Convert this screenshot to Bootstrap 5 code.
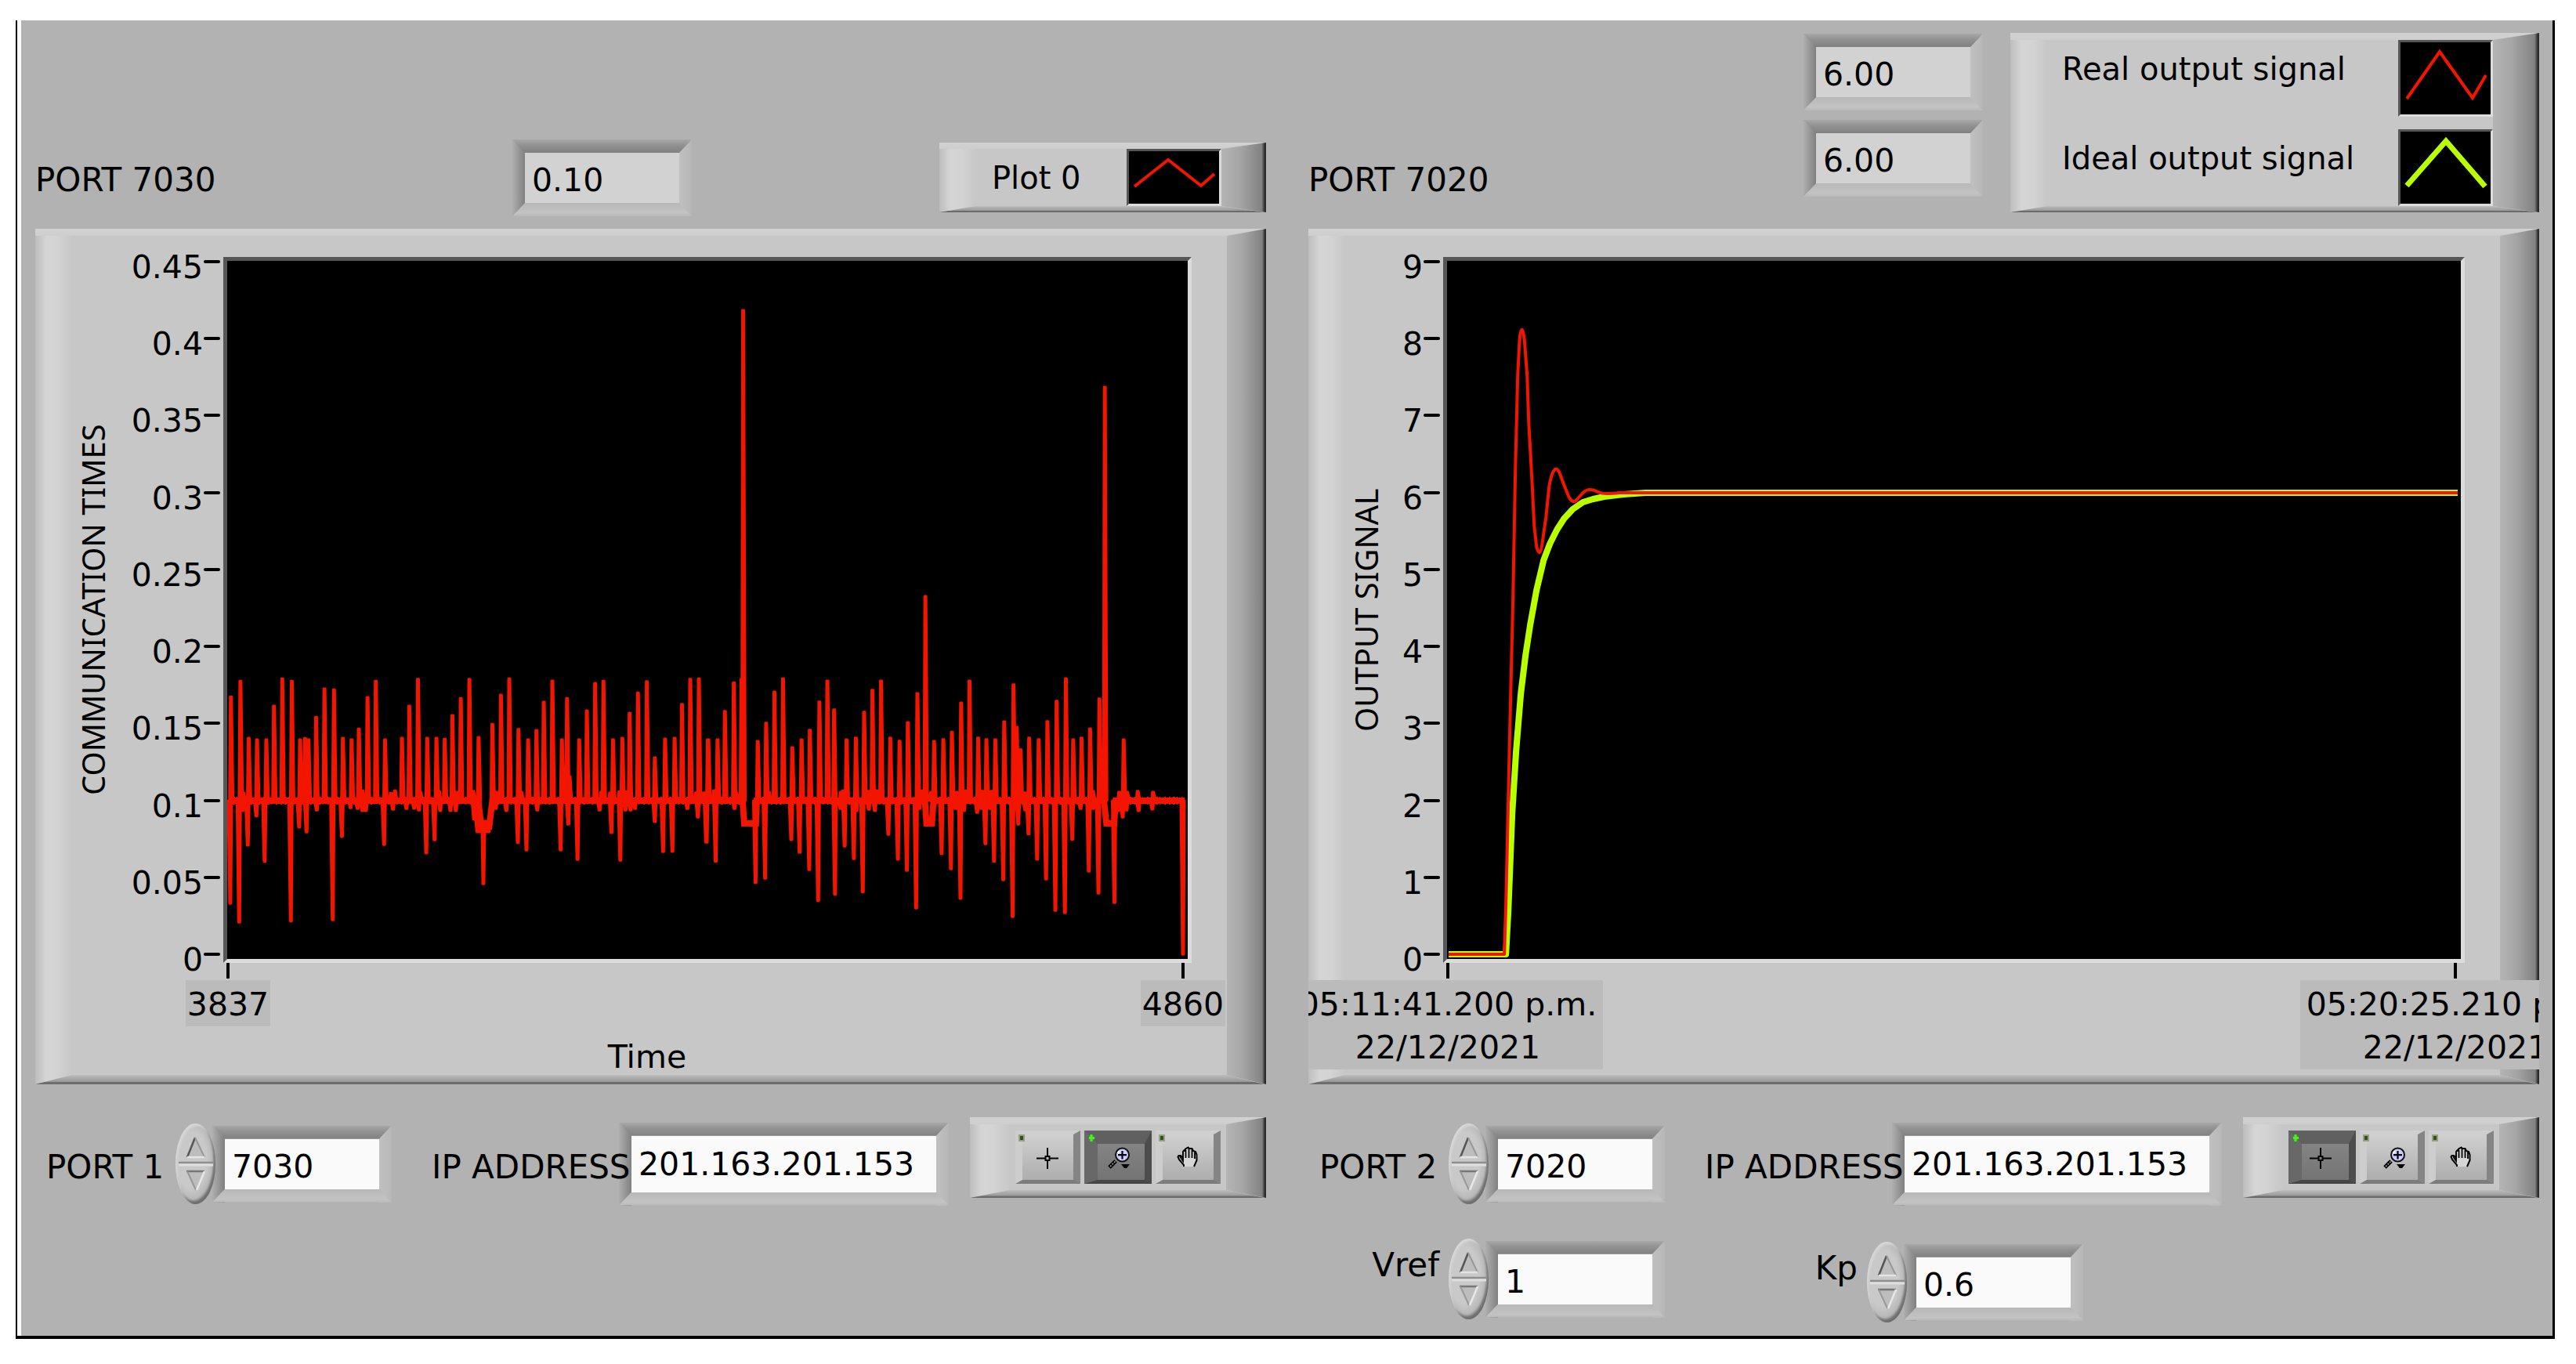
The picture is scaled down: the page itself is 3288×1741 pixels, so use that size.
<!DOCTYPE html>
<html lang="en">
<head>
<meta charset="utf-8">
<meta name="viewport" content="width=device-width, initial-scale=1">
<title>Remote control panel</title>
<link href="https://cdn.jsdelivr.net/npm/bootstrap@5.3.0/dist/css/bootstrap.min.css" rel="stylesheet">
<script src="https://cdn.jsdelivr.net/npm/bootstrap@5.3.0/dist/js/bootstrap.bundle.min.js"></script>
<style>
body { background: #fff; color: #000; font: 41px/50px "DejaVu Sans", Verdana, sans-serif; }
.window { margin: 26px 27px 0 20px; border: solid #000; border-width: 0 3px 4px 2px; padding-left: 5px; }
.front { background: #b2b2b2; padding: 0 17px 17px 18px; gap: 54px; }
.side { flex: 1 1 0; min-width: 0; }
.caption { padding-top: 8px; font-size: 42px; line-height: 42px; white-space: nowrap; }

/* raised metal plate */
.plate { position: relative; --l: 47px; --r: 50px; --t: 9px; --b: 12px;
  padding: var(--t) var(--r) var(--b) var(--l);
  background: linear-gradient(#d2d2d2, #cecece) top/100% var(--t) no-repeat,
    linear-gradient(90deg, #bdbdbd, #d5d5d5 30%, #d3d3d3 60%, #c7c7c7) left/var(--l) 100% no-repeat, #c7c7c7; }
.plate::before, .plate::after { content: ""; position: absolute; pointer-events: none; }
.plate::before { right: 0; top: 0; bottom: 0; width: var(--r);
  background: linear-gradient(90deg, #b4b4b4, #a6a6a6 40%, #828282 90%, #2c2c2c 97%);
  clip-path: polygon(100% 0, 100% 100%, 0 calc(100% - var(--b)), 0 var(--t)); }
.plate::after { left: 0; right: 0; bottom: 0; height: var(--b);
  background: linear-gradient(#bdbdbd, #9a9a9a 70%, #6c6c6c 80%);
  clip-path: polygon(0 100%, var(--l) 0, calc(100% - var(--r)) 0, calc(100% - 2px) 100%); }

/* sunken frame round a value */
.well { position: relative; padding: 17px 16px; width: 229px;
  background: linear-gradient(90deg, #aeaeae, #9c9c9c 40%, #808080) left/16px 100% no-repeat,
    linear-gradient(90deg, #c0c0c0, #bababa 70%, #b6b6b6) right/16px 100% no-repeat; }
.well::before, .well::after { content: ""; position: absolute; left: 0; right: 0; height: 17px; }
.well::before { top: 0; background: linear-gradient(#a8a8a8, #939393 40%, #808080);
  clip-path: polygon(0 0, 100% 0, calc(100% - 16px) 100%, 16px 100%); }
.well::after { bottom: 0; background: linear-gradient(#b8b8b8, #c3c3c3 75%, #b8b8b8);
  clip-path: polygon(0 100%, 16px 0, calc(100% - 16px) 0, 100% 100%); }
.field { display: block; width: 100%; height: 64px; border: 0; border-radius: 0; outline: 0; padding: 6px 0 0 9px;
  background: #fafafa; color: #000; line-height: 50px; }
.field[readonly] { background: #d2d2d2; }
.well-ip { width: 421px; }
.well-ip .field { height: 72px; padding-top: 0; }

.head { height: 266px; padding-bottom: 16px; }
.head-label { font-size: 42px; line-height: 92px; flex: 0 0 609px; }
.legend { --l: 47px; --r: 57px; --t: 8px; --b: 8px; font-size: 40px; margin-bottom: 5px; }
.legend-one { width: 417px; padding-left: 67px; }
.legend-two { width: 675px; padding-left: 66px; --r: 59px; --t: 9px; gap: 16px; }
.swatch, .plot { border: 5px solid; border-color: #565656 #dcdcdc #dcdcdc #565656; background: #000; }
.swatch { width: 121px; height: 98px; border-width: 3px; }
.legend-one .swatch { height: 73px; }
.legend-two .entry { height: 98px; }
.legend-two .entry-name { padding-bottom: 24px; }
.readouts { gap: 12px; margin: 0 35px 25px auto; }

.chart { overflow: hidden; padding: 36px 0 0; }
.plot-row { padding-right: 95px; }
.axis-title { width: 40px; margin-left: 54px; writing-mode: vertical-rl; transform: rotate(180deg);
  font: 40px/40px "Noto Sans", sans-serif; text-align: center; }
.scale { margin: -19px 4px -14px 0; }
.scale-mark::after { content: ""; width: 21px; height: 4px; border-radius: 2px; background: #000; margin-left: 1px; }
.scale-num { line-height: 36px; padding-top: 14px; }
.scale-left { width: 142px; }
.scale-right { width: 74px; }
.plot { flex: 1 1 0; min-width: 0; }
.plot svg { display: block; width: 100%; height: 891px; }
.foot { margin: 0 106px 0 246px; position: relative; z-index: 1; }
.foot-right { margin-left: 178px; margin-right: 107px; }
.foot-mark { width: 0; white-space: nowrap; text-align: center; line-height: 55px; }
.foot-mark::before { content: ""; flex: 0 0 20px; width: 4px; background: #000; margin-bottom: 2px; }
.foot-text { background: #bbb; padding: 4px 2px 0; }
.chart-right { padding-bottom: 19px; }
.time-title { line-height: 55px; padding: 12px 9px 7px 0; }

.controls { padding: 42px 0 0 14px; }
.name { width: 165px; }
.name-ip { width: 239px; margin-left: 51px; position: relative; z-index: 1; }
.controls-two { padding-top: 36px; }
.name-high { margin-bottom: 44px; text-align: right; padding-right: 12px; width: 179px; }
.name-kp { width: 258px; }
.spin { width: 51px; height: 103px; margin-right: -4px; border-radius: 50%; overflow: hidden; position: relative; z-index: 1;
  background: radial-gradient(ellipse at 40% 45%, #c9c9c9 45%, #b9b9b9 62%, #7a7a7a 76%);
  box-shadow: inset 2px 3px 3px #d8d8d8, inset -2px -4px 3px #6f6f6f; }
.spin button, .tool { border: 0; padding: 0; background: none; display: block; }
.spin svg, .tool svg, .swatch svg { display: block; }
.tools { --t: 9px; --b: 10px; --l: 51px; --r: 51px; width: 378px; height: 103px; padding: 17px 58px; gap: 5px; }
.tool { flex: 1 1 0; height: 68px; background: linear-gradient(#d0d0d0, #c2c2c2 40%, #adadad);
  border: solid; border-width: 5px 9px 5px 9px; border-color: #cfcfcf #858585 #7c7c7c #cdcdcd; }
.tool svg { margin: -5px -9px; }
.tool.active { background: linear-gradient(#848484, #747474); border-color: #606060 #4c4c4c #464646 #686868; border-top-width: 17px; border-left-width: 17px; }
.tool.active svg { margin: -17px -9px -5px -17px; }
</style>
</head>
<body>
<svg width="0" height="0" class="position-absolute" aria-hidden="true">
  <defs>
    <g id="up"><path d="M25 18 15 43H37Z" fill="#bdbdbd"/><path d="M25 18 15 43" stroke="#555" stroke-width="2.5"/><path d="M25 18 37 43" stroke="#989898" stroke-width="2"/><path d="M15 43H37" stroke="#e4e4e4" stroke-width="2.5"/><path d="M4 50H48" stroke="#8d8d8d" stroke-width="2.5"/></g>
    <g id="down"><path d="M4 2H48" stroke="#dedede" stroke-width="3"/><path d="M15 10H37L26 34Z" fill="#bdbdbd"/><path d="M14 10H37" stroke="#777" stroke-width="2.5"/><path d="M15 10 26 34" stroke="#999" stroke-width="2"/><path d="M37 10 27 34" stroke="#e8e8e8" stroke-width="2.5"/></g>
    <g id="cross" fill="none" stroke="#000" stroke-width="2"><path d="M41 22V33M41 38V49M27 35.500H38M44 35.500H55"/><rect x="38.500" y="33" width="5" height="5"/></g>
    <g id="lens"><path d="M40 39 32 47" stroke="#000" stroke-width="5"/><path d="M39.500 39.500 33 46" stroke="#aaa" stroke-width="1.500" stroke-dasharray="2 1.500"/><circle cx="48.500" cy="31" r="8.500" fill="#ccf" stroke="#111" stroke-width="2"/><path d="M45 26.500 42.500 29" stroke="#fff" stroke-width="2"/><path d="M48.500 26V36.500M43 31.200H54" stroke="#000" stroke-width="2.200"/><path d="M47 43H58L54 48H51Z"/></g>
    <g id="hand"><path d="M36 46V44L30 37 28.500 33.500 29.500 32H32L35 35V27L36.500 25 38 26V23.500L40 22.500 41.500 21.500 43 23 46.500 23 48 26 51 27 52.500 31V38L49 46" fill="#d6d6d6" stroke="#000" stroke-width="2"/><path d="M38.500 25V35M42.500 22.500V35M46.500 24V35M50 27V36M35 33V39L31 33" fill="none" stroke="#000" stroke-width="1.800"/></g>
    <g id="led-off"><rect x="4" y="5" width="8" height="9" fill="#93a084"/><rect x="6" y="7" width="4" height="5" fill="#2f5020"/></g>
    <g id="led-on"><rect x="5" y="6" width="8" height="7" rx="2" fill="#4a8a35"/><path d="M9 5V14M6 9.500H13" stroke="#49f021" stroke-width="3"/></g>
  </defs>
</svg>

<main class="window">
  <div class="front d-flex">
    <section class="side">
      <header class="head d-flex align-items-end">
        <label class="head-label" for="delay">PORT 7030</label>
        <div class="well"><input class="field" id="delay" value="0.10" readonly></div>
        <div class="plate legend legend-one d-flex align-items-center justify-content-between ms-auto">
          <span>Plot 0</span>
          <span class="swatch"><svg width="115" height="67" viewBox="0 0 115 67"><path d="M7 45 50 11 92 44 109 29" fill="none" stroke="#f21500" stroke-width="4"/></svg></span>
        </div>
      </header>

      <div class="plate chart">
        <div class="plot-row d-flex">
          <div class="axis-title">COMMUNICATION TIMES</div>
          <div class="scale scale-left d-flex flex-column justify-content-between" data-marks="0.45 0.4 0.35 0.3 0.25 0.2 0.15 0.1 0.05 0"></div>
          <div class="plot"><svg viewBox="0 0 1228 891" preserveAspectRatio="none" role="img" aria-label="Communication times"><path id="times" fill="#f21500" stroke="#f21500" stroke-width="3" stroke-linejoin="round"/><path id="base" fill="none" stroke="#f21500" stroke-width="8"/><path id="noise" fill="none" stroke="#f21500" stroke-width="10" stroke-dasharray="2 3 3 2 1 5 2 4"/></svg></div>
        </div>
        <div class="foot d-flex justify-content-between">
          <div class="foot-mark d-flex flex-column align-items-center"><span class="foot-text">3837</span></div>
          <div class="foot-mark d-flex flex-column align-items-center"><span class="foot-text">4860</span></div>
        </div>
        <div class="time-title text-center">Time</div>
      </div>

      <div class="controls d-flex align-items-center">
        <label class="caption name" for="port1">PORT 1</label>
        <div class="spin"><button type="button" aria-label="Increase"><svg width="51" height="51"><use href="#up"/></svg></button><button type="button" aria-label="Decrease"><svg width="51" height="52"><use href="#down"/></svg></button></div>
        <div class="well"><input class="field" id="port1" value="7030"></div>
        <label class="caption name-ip" for="ip1">IP ADDRESS</label>
        <div class="well well-ip"><input class="field" id="ip1" value="201.163.201.153"></div>
        <div class="plate tools d-flex ms-auto mb-3">
          <button type="button" class="tool" aria-label="Cursor"><svg width="83" height="68"><use href="#led-off"/><use href="#cross"/></svg></button>
          <button type="button" class="tool active" aria-label="Zoom"><svg width="83" height="68"><use href="#led-on"/><use href="#lens"/></svg></button>
          <button type="button" class="tool" aria-label="Pan"><svg width="83" height="68"><use href="#led-off"/><use href="#hand"/></svg></button>
        </div>
      </div>
    </section>

    <section class="side">
      <header class="head d-flex align-items-end">
        <div class="head-label">PORT 7020</div>
        <div class="readouts d-flex flex-column">
          <div class="well"><input class="field" value="6.00" aria-label="Real output" readonly></div>
          <div class="well"><input class="field" value="6.00" aria-label="Ideal output" readonly></div>
        </div>
        <div class="plate legend legend-two d-flex flex-column">
          <div class="entry d-flex align-items-center justify-content-between"><span class="entry-name">Real output signal</span>
            <span class="swatch"><svg width="115" height="92" viewBox="0 0 115 92"><path d="M8 72 50 12 92 71 109 42" fill="none" stroke="#f21500" stroke-width="4"/></svg></span></div>
          <div class="entry d-flex align-items-center justify-content-between"><span class="entry-name">Ideal output signal</span>
            <span class="swatch"><svg width="115" height="92" viewBox="0 0 115 92"><path d="M8 69 58 12 108 70" fill="none" stroke="#baff00" stroke-width="7"/></svg></span></div>
        </div>
      </header>

      <div class="plate chart chart-right">
        <div class="plot-row d-flex">
          <div class="axis-title">OUTPUT SIGNAL</div>
          <div class="scale scale-right d-flex flex-column justify-content-between" data-marks="9 8 7 6 5 4 3 2 1 0"></div>
          <div class="plot"><svg viewBox="0 0 1291 891" preserveAspectRatio="none" role="img" aria-label="Output signal"><g fill="none" stroke-linejoin="round"><path stroke="#baff00" stroke-width="8" d="M2 885H75L78 830 83 705 88 625 94 552 100 503 106 464 114 420 123 382 131 361 140 343 149 329 160 317 173 308 186 304 200 301 225 298 253 296H1287"/><path stroke="#f21500" stroke-width="4" d="M2 885H73L75 820 77 733 80 596 84 431 87 266 90 146 92 107C93 83 97 80 99 107L102 146 104 206 108 277 111 338 114 365C117 375 119 375 121 362L126 327 130 288C133 270 138 259 143 270L149 286 155 301C159 308 162 309 166 304L173 296C178 291 184 291 190 294S200 298 220 296H1287"/></g></svg></div>
        </div>
        <div class="foot foot-right d-flex justify-content-between">
          <div class="foot-mark d-flex flex-column align-items-center"><span class="foot-text px-2">05:11:41.200 p.m.<br>22/12/2021</span></div>
          <div class="foot-mark d-flex flex-column align-items-center"><span class="foot-text px-2">05:20:25.210 p.m.<br>22/12/2021</span></div>
        </div>
      </div>

      <div class="controls d-flex align-items-center">
        <label class="caption name" for="port2">PORT 2</label>
        <div class="spin"><button type="button" aria-label="Increase"><svg width="51" height="51"><use href="#up"/></svg></button><button type="button" aria-label="Decrease"><svg width="51" height="52"><use href="#down"/></svg></button></div>
        <div class="well"><input class="field" id="port2" value="7020"></div>
        <label class="caption name-ip" for="ip2">IP ADDRESS</label>
        <div class="well well-ip"><input class="field" id="ip2" value="201.163.201.153"></div>
        <div class="plate tools d-flex ms-auto mb-3">
          <button type="button" class="tool active" aria-label="Cursor"><svg width="83" height="68"><use href="#led-on"/><use href="#cross"/></svg></button>
          <button type="button" class="tool" aria-label="Zoom"><svg width="83" height="68"><use href="#led-off"/><use href="#lens"/></svg></button>
          <button type="button" class="tool" aria-label="Pan"><svg width="83" height="68"><use href="#led-off"/><use href="#hand"/></svg></button>
        </div>
      </div>

      <div class="controls-two d-flex align-items-start">
        <div class="d-flex align-items-center">
          <label class="caption name-high" for="vref">Vref</label>
          <div class="spin"><button type="button" aria-label="Increase"><svg width="51" height="51"><use href="#up"/></svg></button><button type="button" aria-label="Decrease"><svg width="51" height="52"><use href="#down"/></svg></button></div>
          <div class="well"><input class="field" id="vref" value="1"></div>
        </div>
        <div class="d-flex align-items-center mt-1">
          <label class="caption name-high name-kp" for="kp">Kp</label>
          <div class="spin"><button type="button" aria-label="Increase"><svg width="51" height="51"><use href="#up"/></svg></button><button type="button" aria-label="Decrease"><svg width="51" height="52"><use href="#down"/></svg></button></div>
          <div class="well"><input class="field" id="kp" value="0.6"></div>
        </div>
      </div>
    </section>
  </div>
</main>

<script>
document.querySelectorAll('[data-marks]').forEach(el => {
  el.innerHTML = el.dataset.marks.split(' ').map(n =>
    `<div class="scale-mark d-flex align-items-center justify-content-end"><span class="scale-num">${n}</span></div>`).join('');
});

const blocks = [
  { shift: -19, peaks: '58,325 88,265 114,483 140,489 169,489 193,360 219,256 249,265 275,489 290,484 301,489 325,403 351,294 381,298 409,483 436,489 459,448 486,327 512,265 541,489 594,483 617,360 644,257 673,483 702,483 728,487 752,396 778,331 805,257 834,480 877,430 904,318 930,256 959,449 989,489 1015,453 1038,345 1065,264 1095,489 1111,331 1149,489 1173,378 1199,273 1225,265 1255,489 1284,483 1307,388 1333,310 1361,266 1386,558 1418,486 1448,483 1471,353 1497,257 1524,256 1552,489 97,692 470,684 559,694 572,684 652,690 710,686 766,690 817,686 890,690 968,690 1119,630 1218,690 1246,692 1275,688 1295,688 1515,692 1540,692 56,1123 84,1195 95,767 111,900 138,788 164,962 246,1190 272,831 295,850 327,766 377,1186 406,867 433,757 455,760 470,768 481,768 538,898 566,763 608,760 632,759 647,766 670,930 696,880 714,768 746,768 763,768 820,800 849,1045 888,760 921,768 957,890 984,919 1018,766 1091,919 1115,820 1144,955 1213,766 1250,852 1278,958 1294,766 1310,766 1324,760 1386,810 1412,925 1441,924 1488,760 1521,793 1547,889' },
  { shift: 611, peaks: '10,489 39,489 62,380 90,271 114,257 119,-1155 165,495 191,425 217,306 244,255 273,519 302,489 328,452 358,344 383,264 404,374 443,489 472,482 498,383 524,299 551,264 580,482 609,494 635,423 665,312 690,-60 717,495 746,488 773,460 802,348 828,264 855,482 881,488 909,489 937,420 966,278 976,441 988,527 1015,482 1045,488 1072,419 1101,341 1130,255 1153,489 1179,482 1206,447 1235,332 1252,-861 1311,489 28,684 98,692 200,690 425,690 432,684 513,686 537,684 677,684 708,690 788,690 815,684 868,686 897,686 1002,692 1215,686 1297,690 1322,690 1355,686 1403,690 5,889 33,962 92,760 158,1043 188,1027 270,879 296,928 326,994 354,1112 407,1088 424,760 437,904 466,952 474,768 494,1079 513,763 532,768 574,859 604,954 632,997 661,1141 671,760 741,933 770,991 800,1104 785,760 811,768 852,775 865,760 878,895 892,760 905,962 934,1033 963,1174 981,820 1003,766 1013,857 1040,954 1068,1030 1097,1150 1127,1159 1150,878 1176,760 1202,1000 1215,760 1232,1084 1282,1120 1295,768 1308,793 1320,766 1358,768 1401,762 1497,1318' }
];
const zero = 689, px = n => n.toFixed(1);
let d = '';
for (const b of blocks) for (const p of b.peaks.split(' ')) {
  const [c, r] = p.split(',').map(Number), x = c / 2.45 + b.shift, y = r / 3 + 447;
  // the spike inside the wide dip starts from the dip, not from the base line
  if (r === 1045 && b.shift < 0) { d += `M${px(x-2)} 725L${px(x-1)} ${px(y)}H${px(x+1)}L${px(x+2)} 725Z`; continue; }
  if (y < zero) d += `M${px(x-2)} ${zero}L${px(x-1)} ${px(y+1)}H${px(x+1)}L${px(x+3)} ${zero}Z`;
  else d += `M${px(x-3)} ${zero}L${px(x-1)} ${px(y-1)}H${px(x+1)}L${px(x+2)} ${zero}Z`;
}
d += 'M315 689L319 729H335L339 689 334 715H322Z';
document.getElementById('times').setAttribute('d', d);
document.getElementById('base').setAttribute('d', 'M2 689H321L325 722H335L339 689H659L661 718H676L677 689H892L894 718H901L903 689H1121L1124 718H1134L1136 689H1224');
document.getElementById('noise').setAttribute('d', 'M2 689H318M340 689H657M679 689H890M905 689H1119M1138 689H1221');
</script>
</body>
</html>
